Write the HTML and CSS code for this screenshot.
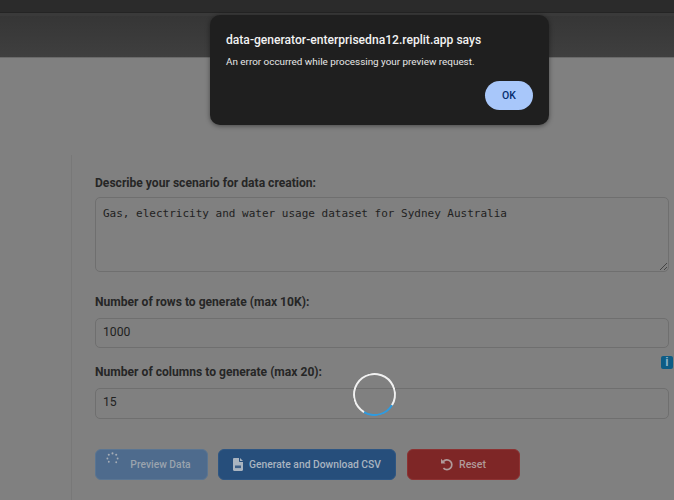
FILE: index.html
```html
<!DOCTYPE html>
<html lang="en">
<head>
<meta charset="utf-8">
<title>Data Generator</title>
<link rel="stylesheet" href="styles.css">
</head>
<body>
<div class="page">
  <div class="topstrip"></div>
  <header class="appbar"></header>
  <main class="main">
    <form class="card">
      <label class="label label-first">Describe your scenario for data creation:</label>
      <div class="textarea">Gas, electricity and water usage dataset for Sydney Australia
        <svg class="grip" width="8" height="8" viewBox="0 0 8 8"><path d="M1 8L8 1M5 8L8 5" stroke="#444" stroke-width="1" fill="none"/></svg>
      </div>
      <label class="label label-rows">Number of rows to generate (max 10K):</label>
      <div class="input">1000</div>
      <label class="label label-cols">Number of columns to generate (max 20):</label>
      <div class="input input-cols">15</div>
      <div class="actions">
        <button type="button" class="btn btn-preview">
          <svg class="dots" width="13" height="13" viewBox="0 0 14 14"><g fill="#a6adb6"><circle cx="7" cy="1.5" r="1.1"/><circle cx="11" cy="3" r="1.1"/><circle cx="12.5" cy="7" r="1"/><circle cx="11" cy="11" r="1"/><circle cx="3" cy="3" r="1.1"/><circle cx="1.5" cy="7" r="1"/><circle cx="3" cy="10.5" r="1"/></g></svg>
          <span>Preview Data</span>
        </button>
        <button type="button" class="btn btn-generate">
          <svg width="10" height="13" viewBox="0 0 10 13"><path d="M0 1.2C0 .5.5 0 1.2 0H6v3.2c0 .5.3.8.8.8H10v7.8c0 .7-.5 1.2-1.2 1.2H1.2C.5 13 0 12.5 0 11.8Z" fill="#a9b4c0"/><path d="M7 0l3 3H7Z" fill="#a9b4c0"/><rect x="2" y="7.5" width="6" height="2.6" fill="#3f6189"/></svg>
          <span>Generate and Download CSV</span>
        </button>
        <button type="button" class="btn btn-reset">
          <svg width="14" height="13" viewBox="0 0 14 13"><path d="M3.2 3.6A4.9 4.9 0 1 1 3.4 10.2" fill="none" stroke="#b09a9a" stroke-width="1.7"/><path d="M1 .8v4.6h4.6Z" fill="#b09a9a"/></svg>
          <span>Reset</span>
        </button>
      </div>
    </form>
  </main>

  <div class="info">i</div>
  <div class="spinner"></div>

  <div class="dialog" role="alertdialog">
    <h1 class="dialog-title">data-generator-enterprisedna12.replit.app says</h1>
    <p class="dialog-text">An error occurred while processing your preview request.</p>
    <div class="dialog-actions"><button type="button" class="ok">OK</button></div>
  </div>
</div>
</body>
</html>
```

FILE: styles.css
```css
* { box-sizing: border-box; }
html, body { margin: 0; padding: 0; }
body { background: #808080; font-family: Roboto, "Liberation Sans", sans-serif; }
.page { position: relative; width: 674px; height: 500px; overflow: hidden; background: #808080; }

.topstrip { height: 13px; background: #2b2b2b; border-bottom: 1px solid #242424; }
.appbar { height: 45px; background: linear-gradient(#363636, #3f3f3f); border-top: 3px solid #3a3a3a; border-bottom: 1px solid #6a6a6a; }

.main { padding: 97px 0 0 71px; }
.card { height: 345px; border-left: 1px solid #787878; padding: 20px 5px 0 23px; display: flex; flex-direction: column; }

.label { font-size: 12.1px; line-height: 16px; font-weight: 700; color: #262626; }
.label-first { margin-bottom: 6px; }
.label-rows { margin-top: 22px; margin-bottom: 8px; }
.label-cols { margin-top: 16px; margin-bottom: 8px; }

.textarea { position: relative; height: 75px; padding: 8px 7px; border: 1px solid #6f6f6f; border-radius: 5px;
  font: 11px/15px "DejaVu Sans Mono", monospace; color: #1f1f1f; white-space: pre-wrap; }
.grip { position: absolute; right: 1px; bottom: 1px; }

.input { height: 30px; padding: 0 7px; border: 1px solid #6f6f6f; border-radius: 5px; font-size: 12.2px; line-height: 27px; color: #222; }
.input-cols { height: 31px; }

.actions { display: flex; gap: 10px; margin-top: 30px; }
.btn { height: 31px; display: flex; align-items: center; justify-content: center; gap: 6px; padding: 0; border: 1px solid transparent; border-radius: 6px; font: 500 10.3px Roboto, "Liberation Sans", sans-serif; }
.btn-preview { position: relative; width: 113px; background: #4e6b8d; border-color: #5a7592; color: #9aa3ad; padding-left: 18px; }
.dots { position: absolute; left: 10px; top: 2px; }
.btn-generate { width: 178px; background: #264e7b; border-color: #2e5683; color: #a9b4c0; }
.btn-reset { width: 113px; margin-left: 1px; gap: 5px; padding-right: 1px; background: #7e2626; border-color: #8c3232; color: #b09a9a; font-size: 10.6px; }

.info { position: absolute; left: 661px; top: 356px; width: 12px; height: 13px; border-radius: 2px; background: #0d5c85; color: #8fb4c8; font: 700 12px/13px "Liberation Sans", sans-serif; text-align: center; }
.spinner { position: absolute; left: 353px; top: 373px; width: 43px; height: 43px; border-radius: 50%; border: 2.5px solid #f1f1f1; border-bottom-color: #2e9be0; transform: rotate(-14deg); }

.dialog { position: absolute; left: 210px; top: 15px; width: 339px; height: 110px; padding: 17px 15px 0 16px; background: #1f1f1f; border-radius: 10px; box-shadow: 0 1px 5px rgba(0,0,0,.45); color: #f2f2f2; }
.dialog-title { margin: 0; font: 500 12.1px/17px Roboto, "Liberation Sans", sans-serif; }
.dialog-text { margin: 5px 0 0; font: 400 9.9px/16px Roboto, "Liberation Sans", sans-serif; color: #e8e8e8; }
.dialog-actions { display: flex; justify-content: flex-end; margin-top: 11px; padding-right: 1px; }
.ok { width: 48px; height: 29px; border: 0; border-radius: 15px; background: #a8c7fa; color: #062e6f; font: 500 10.5px Roboto, "Liberation Sans", sans-serif; padding: 0; }
```
